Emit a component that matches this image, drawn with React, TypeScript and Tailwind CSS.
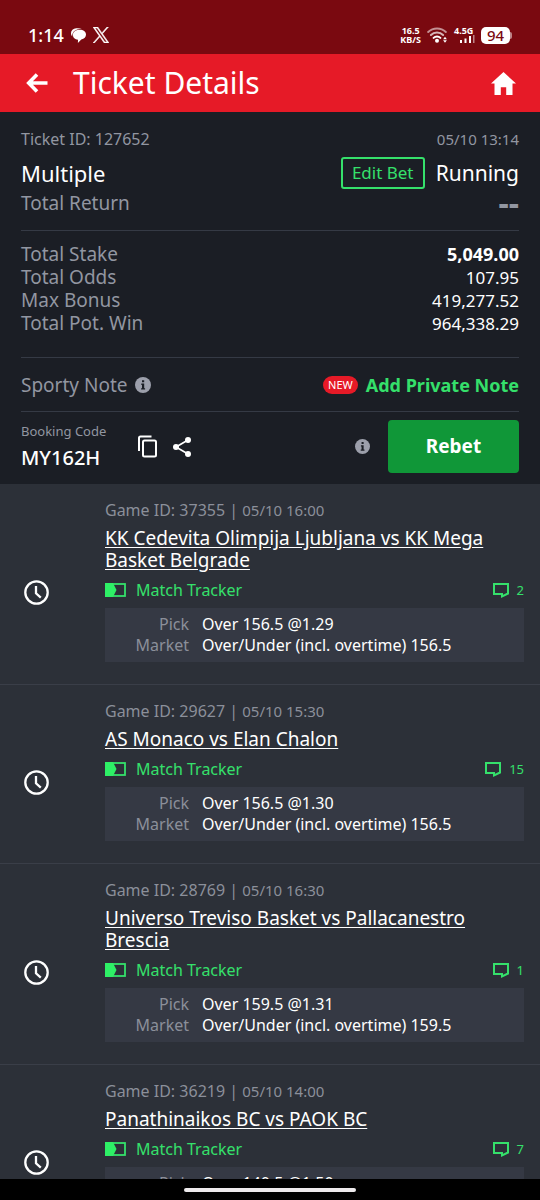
import React from "react";

type Game = {
  id: string;
  date: string;
  title: string;
  comments: number;
  pick: string;
  market: string;
};

const totals = [
  { label: "Total Stake", value: "5,049.00", bold: true },
  { label: "Total Odds", value: "107.95" },
  { label: "Max Bonus", value: "419,277.52" },
  { label: "Total Pot. Win", value: "964,338.29" },
];

const games: Game[] = [
  {
    id: "37355",
    date: "05/10 16:00",
    title: "KK Cedevita Olimpija Ljubljana vs KK Mega Basket Belgrade",
    comments: 2,
    pick: "Over 156.5 @1.29",
    market: "Over/Under (incl. overtime) 156.5",
  },
  {
    id: "29627",
    date: "05/10 15:30",
    title: "AS Monaco vs Elan Chalon",
    comments: 15,
    pick: "Over 156.5 @1.30",
    market: "Over/Under (incl. overtime) 156.5",
  },
  {
    id: "28769",
    date: "05/10 16:30",
    title: "Universo Treviso Basket vs Pallacanestro Brescia",
    comments: 1,
    pick: "Over 159.5 @1.31",
    market: "Over/Under (incl. overtime) 159.5",
  },
  {
    id: "36219",
    date: "05/10 14:00",
    title: "Panathinaikos BC vs PAOK BC",
    comments: 7,
    pick: "Over 140.5 @1.50",
    market: "Over/Under (incl. overtime) 140.5",
  },
];

function InfoIcon({ className }: { className?: string }) {
  return (
    <svg viewBox="0 0 16 16" className={className} aria-hidden="true">
      <circle cx="8" cy="8" r="8" fill="#9c9fab" />
      <path d="M7 3.2h2.200v2H7zM6.300 6.600h2.900v4.700h.9v1.300H6.100v-1.300h.9V7.900h-.7z" fill="#1b1e25" />
    </svg>
  );
}

function StatusBar() {
  return (
    <div className="flex h-[54px] shrink-0 items-center justify-between bg-[#7a0910] px-7 pt-4 text-white">
      <div className="flex items-center gap-[7px]">
        <span className="text-[18px] leading-[22px] font-medium">1:14</span>
        <svg viewBox="0 0 15 15" className="h-[15px] w-[15px]" aria-hidden="true">
          <path
            d="M1.200 8.400C.2 7.300 0 6.200 0 5 0 2.200 2.200.4 5.200.2 7.400 0 9.300.2 10.600 1 7.600.9 4.900 1.500 3.300 3.100 1.900 4.500 1.200 6.200 1.200 8.400z"
            fill="#fff"
          />
          <path
            d="M8.500 1.700c3.600-.1 6.500 1.700 6.500 4.900 0 2.500-1.700 4.500-4.700 5L6.900 14.900l.1-3.200C3.900 11.500 1.900 9.900 1.900 7c0-3.300 2.700-5.200 6.600-5.300z"
            fill="#fff"
          />
        </svg>
        <svg viewBox="0 0 24 24" className="h-4 w-4" aria-hidden="true">
          <path
            d="M14.258 10.152 23.176 0h-2.113l-7.747 8.813L7.133 0H0l9.352 13.328L0 23.973h2.113l8.176-9.309 6.531 9.309h7.133zm-2.895 3.293-.949-1.328L2.875 1.560h3.246l6.086 8.523.945 1.328 7.910 11.078h-3.246z"
            fill="#fff"
            stroke="#fff"
            strokeWidth="0.800"
          />
        </svg>
      </div>
      <div className="flex items-center gap-[6px]">
        <div className="text-center text-[9px] leading-[9px] font-bold">
          <div>16.5</div>
          <div>KB/S</div>
        </div>
        <svg viewBox="0 0 21 16" className="h-4 w-[21px]" aria-hidden="true">
          <g fill="none" stroke="#fff" strokeWidth="2" strokeLinecap="round">
            <path d="M1.200 5a12.500 12.500 0 0 1 17.600 0" opacity="0.550" />
            <path d="M3.900 8a8.600 8.600 0 0 1 12.200 0" opacity="0.700" />
            <path d="M6.600 10.900a4.800 4.800 0 0 1 6.800 0" />
          </g>
          <circle cx="10" cy="13.800" r="2" fill="#fff" />
          <path d="M16.100 12.200 18 9.800l1.900 2.400zM16.100 13.300 18 15.700l1.900-2.400z" fill="#fff" />
        </svg>
        <div className="flex w-[21px] flex-col">
          <span className="text-[9px] leading-[8px] font-bold">4.5G</span>
          <svg viewBox="0 0 21 8" className="h-2 w-[21px]" aria-hidden="true">
            <path d="M6 5h2v3H6zM10.500 3.500h2V8h-2zM15 1h2v7h-2z" fill="#fff" />
            <path d="M19-1h1.500v9H19z" fill="#fff" opacity="0.500" />
          </svg>
        </div>
        <div className="flex items-center">
          <span className="flex h-[17px] w-[29px] items-center justify-center rounded-[5px] bg-white text-[15px] leading-[17px] font-medium text-[#7a0910]">
            94
          </span>
          <span className="h-[7px] w-[2px] rounded-r bg-white/50" />
        </div>
      </div>
    </div>
  );
}

function Header() {
  return (
    <header className="flex h-[58px] shrink-0 items-center bg-[#e61a27] pr-6 pl-[26px] text-white">
      <button type="button" aria-label="Back">
        <svg viewBox="0 0 22 20" className="h-5 w-[22px]" aria-hidden="true">
          <path d="M11 1.500 2.700 10l8.300 8.500M2.700 10H21.500" fill="none" stroke="#fff" strokeWidth="3.600" />
        </svg>
      </button>
      <h1 className="ml-[25px] flex-1 text-[30px] leading-9">Ticket Details</h1>
      <button type="button" aria-label="Home">
        <svg viewBox="0 0 25 23" className="h-[23px] w-[25px]" aria-hidden="true">
          <path d="M12.500 0 25 11.500h-3.500V23h-6.300v-7.700H9.800V23H3.500V11.500H0z" fill="#fff" />
        </svg>
      </button>
    </header>
  );
}

function TicketSummary() {
  return (
    <section className="shrink-0 bg-[#1b1e25] px-[21px] pt-[17px] text-[#9296a1]">
      <div className="flex justify-between text-[16px] leading-5">
        <span>Ticket ID: 127652</span>
        <span className="text-[15px]">05/10 13:14</span>
      </div>
      <div className="mt-2 flex h-8 items-center leading-7 text-white">
        <span className="flex-1 text-[22px]">Multiple</span>
        <button
          type="button"
          className="mr-[11px] h-8 w-[84px] rounded-[3px] border-2 border-[#35e06b] text-[17px] leading-5 text-[#35e06b]"
        >
          Edit Bet
        </button>
        <span className="text-[21px]">Running</span>
      </div>
      <div className="mt-[3px] flex justify-between text-[19px] leading-[22px]">
        <span>Total Return</span>
        <span className="text-[32px] font-bold">--</span>
      </div>

      <dl className="mt-4 border-y border-[#353a45] pt-3 pb-[22px]">
        {totals.map((row) => (
          <div key={row.label} className="flex justify-between leading-[23px]">
            <dt className="text-[19px]">{row.label}</dt>
            <dd className={row.bold ? "text-[18px] font-bold text-white" : "text-[17px] text-white"}>
              {row.value}
            </dd>
          </div>
        ))}
      </dl>

      <div className="flex h-[54px] items-center border-b border-[#353a45]">
        <span className="text-[19px] leading-6">Sporty Note</span>
        <InfoIcon className="ml-2 h-4 w-4" />
        <span className="mr-2 ml-auto h-[18px] rounded-full bg-[#e61a27] px-[5px] text-[11px] leading-[18px] text-white">
          NEW
        </span>
        <button type="button" className="text-[18px] leading-6 font-bold text-[#35e06b]">
          Add Private Note
        </button>
      </div>

      <div className="flex items-center pt-2 pb-[11px]">
        <div className="w-[116px]">
          <div className="text-[13px] leading-5">Booking Code</div>
          <div className="mt-[3px] text-[20px] leading-7 font-medium text-white">MY162H</div>
        </div>
        <button type="button" aria-label="Copy booking code">
          <svg viewBox="0 0 20 23" className="h-[23px] w-5" aria-hidden="true">
            <g fill="none" stroke="#fff" strokeWidth="2">
              <path d="M2 16V3Q2 1.500 3.500 1.500H14.500" />
              <rect x="6" y="5.500" width="13" height="16" rx="1.500" />
            </g>
          </svg>
        </button>
        <button type="button" aria-label="Share ticket" className="ml-4">
          <svg viewBox="0 0 18 20" className="h-5 w-[18px]" aria-hidden="true">
            <path d="M15 3 3 10l12 7" fill="none" stroke="#fff" strokeWidth="1.700" />
            <circle cx="15" cy="3" r="3" fill="#fff" />
            <circle cx="3" cy="10" r="3" fill="#fff" />
            <circle cx="15" cy="17" r="3" fill="#fff" />
          </svg>
        </button>
        <InfoIcon className="mr-[18px] ml-auto h-[15px] w-[15px]" />
        <button
          type="button"
          className="h-[53px] w-[131px] rounded bg-[#109738] text-[19px] font-bold text-white"
        >
          Rebet
        </button>
      </div>
    </section>
  );
}

function GameRow({ game }: { game: Game }) {
  return (
    <li className="flex border-t border-[#3a3e48] pt-4 pr-4 pb-[22px] pl-6 first:border-t-0">
      <div className="flex w-[81px] shrink-0 items-center pt-[22px]">
        <svg viewBox="0 0 25 25" className="h-[25px] w-[25px]" role="img" aria-label="Not started">
          <circle cx="12.500" cy="12.500" r="11.200" fill="none" stroke="#fff" strokeWidth="2.300" />
          <path d="M12 6v7.300l4.800 4.300" fill="none" stroke="#fff" strokeWidth="2.300" />
        </svg>
      </div>
      <div className="min-w-0 flex-1">
        <p className="text-[16px] leading-5 text-[#8b8f9a]">
          Game ID: {game.id} | <span className="text-[15px]">{game.date}</span>
        </p>
        <a href="#" className="mt-[7px] block text-[19px] leading-[22px] text-white underline underline-offset-2">
          {game.title}
        </a>
        <div className="mt-[9px] flex items-center justify-between leading-5 text-[#35e06b]">
          <a href="#" className="flex items-center gap-[10px] text-[16px]">
            <svg viewBox="0 0 21 14" className="h-[14px] w-[21px]" aria-hidden="true">
              <rect x="1" y="1" width="19" height="12" fill="none" stroke="#35e06b" strokeWidth="1.800" />
              <path d="M0 0h8l3.500 7L8 14H0z" fill="#2ef066" />
            </svg>
            Match Tracker
          </a>
          <a href="#" className="flex items-center gap-2 text-[13px]">
            <svg viewBox="0 0 16 15" className="h-[15px] w-4" aria-hidden="true">
              <path d="M1 1h14v9.500L9 13.400V11H1z" fill="none" stroke="#35e06b" strokeWidth="2" />
            </svg>
            {game.comments}
          </a>
        </div>
        <dl className="mt-2 grid grid-cols-[84px_1fr] gap-x-[13px] bg-[#353944] py-[6px] text-[16px] leading-[21px]">
          <dt className="text-right text-[#8b8f9a]">Pick</dt>
          <dd className="text-white">{game.pick}</dd>
          <dt className="text-right text-[#8b8f9a]">Market</dt>
          <dd className="text-white">{game.market}</dd>
        </dl>
      </div>
    </li>
  );
}

export default function App() {
  return (
    <div className="flex h-screen flex-col overflow-hidden bg-[#2c3038] font-['Noto_Sans',sans-serif]">
      <StatusBar />
      <Header />
      <TicketSummary />
      <ul className="min-h-0 flex-1 overflow-hidden">
        {games.map((game) => (
          <GameRow key={game.id} game={game} />
        ))}
      </ul>
      <div className="flex h-[21px] shrink-0 items-center justify-center bg-black">
        <div className="h-1 w-[172px] rounded-full bg-[#eeeaec]" />
      </div>
    </div>
  );
}
